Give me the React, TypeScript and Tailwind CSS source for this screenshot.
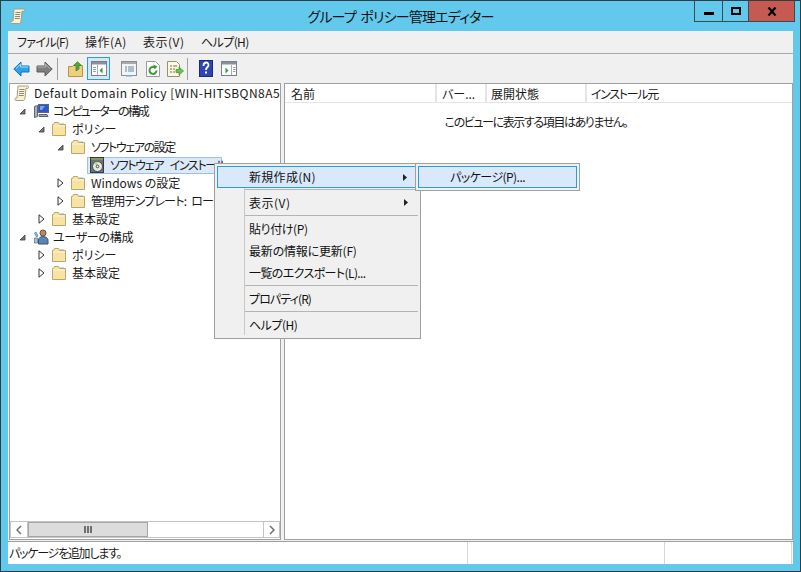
import type { ReactNode } from "react";

const font = "font-['Noto_Sans_CJK_JP','Liberation_Sans',sans-serif] [font-feature-settings:'palt']";

function ScrollIcon() {
  return (
    <svg width="16" height="16" viewBox="0 0 16 16" className="shrink-0">
      <path d="M4 1h9.500c1.200 0 1.500 1.800.5 2.300h-2L11 13c-.2 1.500-1 2.500-2 2.500H1.800c-1.300 0-1.300-2.500 0-2.500H3z" fill="#fbf2d0" stroke="#a39e84" />
      <path d="M5.500 4.500h5M5.200 6.500h5M5 8.500h5M4.800 10.500h5" stroke="#8a897c" />
    </svg>
  );
}

function FolderIcon() {
  return (
    <svg width="14" height="14" viewBox="0 0 14 14" className="shrink-0">
      <path d="M.5 2.500h1l1-2h4l1 2h6v11H.5z" fill="#f8e3a3" stroke="#bba76d" />
      <path d="M1.500 4h11.500" stroke="#fdf5d5" />
      <path d="M8.500 1.500h3.500v1H8.500z" fill="#7fb2dc" />
    </svg>
  );
}

function ComputerIcon() {
  return (
    <svg width="16" height="16" viewBox="0 0 16 16" className="shrink-0">
      <path d="M1.500 3.500l3-1v11l-3 1z" fill="#aab0bb" stroke="#5f6672" />
      <rect x="5.500" y="1.500" width="10" height="8" fill="#2f55c9" stroke="#5f6672" />
      <path d="M7 3h5l-3 4H7z" fill="#6fa6ee" />
      <path d="M6 11.500h8l1 2H6z" fill="#9fa6b2" stroke="#5f6672" />
    </svg>
  );
}

function UserIcon() {
  return (
    <svg width="16" height="16" viewBox="0 0 16 16" className="shrink-0">
      <circle cx="10" cy="4" r="3" fill="#b98a5e" stroke="#6b5040" />
      <path d="M5.500 15v-4c0-2 2-3.500 4.500-3.500S15 9 15 11v4z" fill="#5b86b4" stroke="#3e556f" />
      <path d="M3 3l2 4-1.500 1L1.500 4zM1.500 9h3v5h-3z" fill="#9fc3e6" stroke="#5f7f9f" strokeWidth=".8" />
    </svg>
  );
}

function CdIcon() {
  return (
    <svg width="16" height="16" viewBox="0 0 16 16" className="shrink-0">
      <rect x="1.500" y=".5" width="13" height="15" fill="#6f7370" stroke="#3a3a3a" />
      <rect x="2" y="1" width="12" height="2" fill="#7f9a62" />
      <circle cx="8.500" cy="9.500" r="5" fill="#e4e9ec" stroke="#4e4e4e" />
      <path d="M8.500 9.500L5 6a5 5 0 0 1 3.500-1.500z" fill="#a9d696" />
      <circle cx="8.500" cy="9.500" r="1.300" fill="#fff" stroke="#444" />
    </svg>
  );
}

function ArrowLeftIcon() {
  return (
    <svg width="17" height="16" viewBox="0 0 17 16">
      <path d="M.8 8L8 1v4h8v6H8v4z" fill="#29a3ec" stroke="#1b6fb5" />
      <path d="M3 7.500L7.500 3.200v2.800h8" fill="none" stroke="#a8e0fb" />
    </svg>
  );
}

function ArrowRightIcon() {
  return (
    <svg width="17" height="16" viewBox="0 0 17 16">
      <path d="M16.200 8L9 1v4H1v6h8v4z" fill="#7f7f7f" stroke="#5c5c5c" />
      <path d="M1.500 6h8V3.200L14 7.500" fill="none" stroke="#b5b5b5" />
    </svg>
  );
}

function UpFolderIcon() {
  return (
    <svg width="16" height="16" viewBox="0 0 16 16">
      <path d="M.5 5.500h4l1-1h9v11H.5z" fill="#efcf7e" stroke="#b39550" />
      <path d="M8 10V4.500H5.500L9.500.7l4 3.800H11V8z" fill="#55a63c" stroke="#3b7d28" strokeWidth=".7" />
    </svg>
  );
}

function PaneToggleIcon({ right }: { right?: boolean }) {
  return (
    <svg width="16" height="15" viewBox="0 0 16 15">
      <rect x=".5" y=".5" width="15" height="14" fill="#fff" stroke="#7b8088" />
      <rect x="1" y="1" width="14" height="2.500" fill="#8a9099" />
      {right ? (
        <>
          <path d="M10.500 4v10" stroke="#a9adb3" />
          <path d="M4.500 6.500l3 3-3 3z" fill="#2e9e3f" />
          <path d="M12 6.500h2.500M12 8.500h2.500M12 10.500h2.500" stroke="#9aa0a8" />
        </>
      ) : (
        <>
          <path d="M6.500 4v10" stroke="#a9adb3" />
          <path d="M11.500 6.500l-3 3 3 3z" fill="#2e9e3f" />
          <path d="M2 6.500h3M2 8.500h3M2 10.500h3" stroke="#9aa0a8" />
        </>
      )}
    </svg>
  );
}

function PropsIcon() {
  return (
    <svg width="16" height="16" viewBox="0 0 16 16">
      <rect x=".5" y=".5" width="15" height="14" fill="#f4f4f4" stroke="#8a8f96" />
      <rect x="1" y="1" width="14" height="2" fill="#a5abb3" />
      <path d="M4 6h2M7 6h6M4 8h2M7 8h6M4 10h2M7 10h6" stroke="#6d87a8" />
      <rect x="5" y="14" width="6" height="1.500" fill="#5cb0e0" />
    </svg>
  );
}

function RefreshIcon() {
  return (
    <svg width="14" height="16" viewBox="0 0 14 16">
      <path d="M.5.5h9l4 4v11H.5z" fill="#fff" stroke="#9a9a9a" />
      <path d="M10.500 9.500A3.500 3.500 0 1 1 9 6.500" fill="none" stroke="#3c9a36" strokeWidth="2" />
      <path d="M7.500 3.500l4 2-3 3z" fill="#3c9a36" />
    </svg>
  );
}

function ExportIcon() {
  return (
    <svg width="17" height="16" viewBox="0 0 17 16">
      <path d="M.5.5h9l3 3v12H.5z" fill="#fdf8dc" stroke="#94907a" />
      <path d="M3 5h2M6 5h4M3 8h2M6 8h2M3 11h2M6 11h2" stroke="#6c6c6c" />
      <path d="M9 8.500h3V6l4.500 4-4.500 4v-2.500H9z" fill="#6cc24a" stroke="#3f8f2a" strokeWidth=".7" />
    </svg>
  );
}

function HelpIcon() {
  return (
    <svg width="14" height="17" viewBox="0 0 14 17">
      <rect x=".5" y=".5" width="13" height="16" fill="#2c46b5" stroke="#1c2a78" />
      <path d="M4.500 6c0-4.500 5-4.500 5-1 0 2.500-2.500 2-2.500 5" fill="none" stroke="#fff" strokeWidth="1.800" />
      <rect x="6" y="11.500" width="2" height="2" fill="#fff" />
    </svg>
  );
}

function Expander({ open }: { open?: boolean }) {
  return open ? (
    <svg width="7" height="7" viewBox="0 0 7 7" className="ml-[1px]">
      <path d="M6 1v5H1z" fill="#777" stroke="#3c3c3c" strokeWidth=".8" />
    </svg>
  ) : (
    <svg width="7" height="10" viewBox="0 0 7 10" className="ml-[1px]">
      <path d="M1 .8L6 5 1 9.200z" fill="#fff" stroke="#333" />
    </svg>
  );
}

function TreeRow({
  pl,
  open,
  closed,
  icon,
  gap,
  children,
}: {
  pl: string;
  open?: boolean;
  closed?: boolean;
  icon: ReactNode;
  gap: string;
  children: ReactNode;
}) {
  return (
    <div className={`flex h-[18px] items-center whitespace-nowrap ${pl}`}>
      <span className="flex w-[15px] shrink-0 items-center">
        {open && <Expander open />}
        {closed && <Expander />}
      </span>
      {icon}
      <span className={gap}>{children}</span>
    </div>
  );
}

function Tree() {
  return (
    <div>
      <div className="flex h-[18px] items-center whitespace-nowrap pl-[4px]">
        <ScrollIcon />
        <span className="ml-[4px] tracking-[0.45px]">Default Domain Policy [WIN-HITSBQN8A5</span>
      </div>
      <TreeRow pl="pl-[8px]" open icon={<ComputerIcon />} gap="ml-[4px] tracking-[-1.8px]">コンピューターの構成</TreeRow>
      <TreeRow pl="pl-[27px]" open icon={<FolderIcon />} gap="ml-[6px]">ポリシー</TreeRow>
      <TreeRow pl="pl-[46px]" open icon={<FolderIcon />} gap="ml-[6px] tracking-[-1.4px]">ソフトウェアの設定</TreeRow>
      <div className="flex h-[18px] items-center whitespace-nowrap pl-[77px]">
        <div className="flex h-[17px] w-[135px] items-center border border-[#99c2ea] bg-[#dbe9f9] pl-[1px]">
          <CdIcon />
          <span className="ml-[5px] tracking-[-1.3px] [word-spacing:5px]">ソフトウェア インストール</span>
        </div>
      </div>
      <TreeRow pl="pl-[46px]" closed icon={<FolderIcon />} gap="ml-[6px]">Windows の設定</TreeRow>
      <TreeRow pl="pl-[46px]" closed icon={<FolderIcon />} gap="ml-[6px] tracking-[-0.8px] [word-spacing:3px]">管理用テンプレート: ローカル</TreeRow>
      <TreeRow pl="pl-[27px]" closed icon={<FolderIcon />} gap="ml-[6px]">基本設定</TreeRow>
      <TreeRow pl="pl-[8px]" open icon={<UserIcon />} gap="ml-[4px] tracking-[-0.3px]">ユーザーの構成</TreeRow>
      <TreeRow pl="pl-[27px]" closed icon={<FolderIcon />} gap="ml-[6px]">ポリシー</TreeRow>
      <TreeRow pl="pl-[27px]" closed icon={<FolderIcon />} gap="ml-[6px]">基本設定</TreeRow>
    </div>
  );
}

function ScrollBar() {
  return (
    <div className="flex h-[17px] border border-[#c4c4c4] bg-white">
      <div className="flex w-[17px] items-center justify-center border-r border-[#c4c4c4]">
        <svg width="6" height="10" viewBox="0 0 6 10"><path d="M5 1L1 5l4 4" fill="none" stroke="#6e6e6e" strokeWidth="1.500" /></svg>
      </div>
      <div className="flex w-[120px] items-center justify-center gap-[1px] border border-[#a6a6a6] bg-[#dcdcdc]">
        <span className="h-[7px] w-[2px] bg-[#6e6e6e]" />
        <span className="h-[7px] w-[2px] bg-[#6e6e6e]" />
        <span className="h-[7px] w-[2px] bg-[#6e6e6e]" />
      </div>
      <div className="flex-1" />
      <div className="flex w-[16px] items-center justify-center border-l border-[#c4c4c4]">
        <svg width="6" height="10" viewBox="0 0 6 10"><path d="M1 1l4 4-4 4" fill="none" stroke="#6e6e6e" strokeWidth="1.500" /></svg>
      </div>
    </div>
  );
}

function MenuItem({ children, arrow, active, track }: { children: ReactNode; arrow?: boolean; active?: boolean; track?: string }) {
  return (
    <div
      className={`relative flex h-[22px] items-center ${
        active ? "border border-[#26a0da] bg-[#d9e8fb] pl-[31px]" : "pl-[32px]"
      } ${track ?? ""}`}
    >
      {children}
      {arrow && (
        <svg width="4" height="7" viewBox="0 0 4 7" className="absolute right-[10px] top-[7px]">
          <path d="M0 0l4 3.500L0 7z" fill="#222" />
        </svg>
      )}
    </div>
  );
}

function MenuSep() {
  return <div className="mb-[2px] ml-[28px] mt-[1px] h-[1px] bg-[#b4b4b4]" />;
}

function ContextMenu() {
  return (
    <>
      <div className={`absolute left-[213px] top-[162px] h-[176px] w-[207px] border border-[#a0a0a0] bg-[#f0f0f0] p-[2px] text-[12px] leading-none text-[#111] ${font}`}>
        <div className="absolute bottom-[3px] left-[29px] top-[24px] w-[1px] bg-[#c8c8c8]" />
        <MenuItem active arrow track="tracking-[0.3px]">新規作成(N)</MenuItem>
        <MenuSep />
        <MenuItem arrow track="tracking-[0.5px]">表示(V)</MenuItem>
        <MenuSep />
        <MenuItem track="tracking-[-0.4px]">貼り付け(P)</MenuItem>
        <MenuItem track="tracking-[-0.2px]">最新の情報に更新(F)</MenuItem>
        <MenuItem track="tracking-[-0.6px]">一覧のエクスポート(L)...</MenuItem>
        <MenuSep />
        <MenuItem track="tracking-[-0.9px]">プロパティ(R)</MenuItem>
        <MenuSep />
        <MenuItem track="tracking-[-0.5px]">ヘルプ(H)</MenuItem>
      </div>
      <div className={`absolute left-[414px] top-[162px] h-[28px] w-[165px] border border-[#a0a0a0] bg-[#f0f0f0] p-[2px] text-[12px] leading-none text-[#111] ${font}`}>
        <MenuItem active track="tracking-[-0.55px]">パッケージ(P)...</MenuItem>
      </div>
    </>
  );
}

export default function App() {
  return (
    <div className={`relative h-[572px] w-[801px] overflow-hidden border border-[#2f3d44] bg-[#62c9ec] text-[12px] text-[#1a1a1a] ${font}`}>
      {/* title bar */}
      <div className="flex h-[30px] items-center pl-[9px]">
        <ScrollIcon />
        <div className="flex-1 pr-[25px] text-center text-[14px] tracking-[-0.8px] text-[#111] [word-spacing:2px]">グループ ポリシー管理エディター</div>
      </div>
      <div className="absolute right-[5px] top-0 flex h-[21px] border-x border-b border-[#3a4a50]">
        <div className="flex w-[28px] items-center justify-center border-r border-[#3a4a50]">
          <span className="mt-[5px] h-[3px] w-[10px] bg-black" />
        </div>
        <div className="flex w-[26px] items-center justify-center border-r border-[#3a4a50]">
          <span className="h-[8px] w-[10px] border-[2px] border-black" />
        </div>
        <div className="flex w-[45px] items-center justify-center bg-[#c75a50]">
          <svg width="10" height="9" viewBox="0 0 10 9"><path d="M1.500 0.500l7 8M8.500 0.500l-7 8" stroke="#000" strokeWidth="2.200" /></svg>
        </div>
      </div>

      {/* client area */}
      <div className="mx-[7px] flex h-[533px] flex-col bg-[#f0f0f0]">
        <div className="box-content flex h-[22px] items-center border-b border-[#a7a7b0] pl-[9px] text-[12px]">
          <span className="w-[68px] tracking-[-0.7px]">ファイル(F)</span>
          <span className="w-[58px] tracking-[0.5px]">操作(A)</span>
          <span className="w-[58px] tracking-[0.5px]">表示(V)</span>
          <span className="tracking-[-0.6px]">ヘルプ(H)</span>
        </div>
        <div className="flex h-[29px] items-center pl-[5px]">
          <ArrowLeftIcon />
          <span className="ml-[6px]"><ArrowRightIcon /></span>
          <span className="ml-[4px] h-[22px] w-[1px] bg-[#a0a0a0]" />
          <span className="ml-[10px]"><UpFolderIcon /></span>
          <span className="ml-[3px] flex h-[23px] w-[23px] items-center justify-center border border-[#26a0da] bg-[#d5e6f7]">
            <PaneToggleIcon />
          </span>
          <span className="ml-[11px]"><PropsIcon /></span>
          <span className="ml-[9px]"><RefreshIcon /></span>
          <span className="ml-[7px]"><ExportIcon /></span>
          <span className="ml-[3px] h-[22px] w-[1px] bg-[#a0a0a0]" />
          <span className="ml-[11px]"><HelpIcon /></span>
          <span className="ml-[8px]"><PaneToggleIcon right /></span>
        </div>

        <div className="flex min-h-0 flex-1">
          {/* tree pane */}
          <div className="ml-[1px] flex w-[272px] flex-col border border-[#a0a0a0] bg-white">
            <div className="min-h-0 flex-1 overflow-hidden">
              <Tree />
            </div>
            <ScrollBar />
            <div className="h-[1px]" />
          </div>
          <div className="w-[3px]" />
          {/* list pane */}
          <div className="flex-1 border border-[#a0a0a0] bg-white">
            <div className="flex h-[19px] items-center border-b border-[#e5e5e5] leading-[20px]">
              <div className="h-full w-[152px] border-r-[2px] border-[#e5e5e5] pl-[6px]">名前</div>
              <div className="h-full w-[50px] border-r-[2px] border-[#e5e5e5] pl-[5px]">バー...</div>
              <div className="h-full w-[100px] border-r-[2px] border-[#e5e5e5] pl-[4px]">展開状態</div>
              <div className="h-full pl-[4px] tracking-[-1.3px]">インストール元</div>
            </div>
            <div className="pr-[5px] pt-[10px] text-center tracking-[-1.4px]">このビューに表示する項目はありません。</div>
          </div>
        </div>

        {/* status bar */}
        <div className="mt-[1px] flex h-[23px] items-center border-t border-[#a0a0a0] bg-white px-[1px]">
          <div className="h-full w-[459px] border-r border-[#d8d8d8] leading-[22px] tracking-[-1.25px]">パッケージを追加します。</div>
          <div className="h-full w-[197px] border-r border-[#d8d8d8]" />
          <div className="h-full flex-1 border-r border-[#d8d8d8]" />
        </div>
      </div>

      <ContextMenu />
    </div>
  );
}
